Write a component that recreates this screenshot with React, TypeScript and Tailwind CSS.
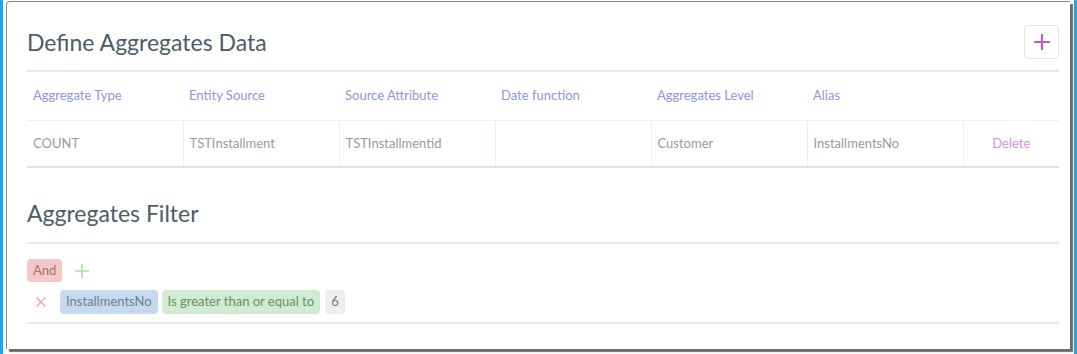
import React from 'react';

const columns = ['Aggregate Type', 'Entity Source', 'Source Attribute', 'Date function', 'Aggregates Level', 'Alias'];
const row = ['COUNT', 'TSTInstallment', 'TSTInstallmentid', '', 'Customer', 'InstallmentsNo'];

export default function App() {
  return (
    <div className="flex h-[354px] w-[1077px] overflow-hidden bg-white" style={{ fontFamily: 'Lato, "Open Sans", sans-serif' }}>
      <div className="w-[3px] shrink-0 bg-[#22a6e0]" />
      <div className="flex-1 pl-[3px] pt-[1px] pr-[4px]">
        <div className="h-[348px] rounded-tl-[4px] border-l border-t border-[#8a8a8a] bg-white shadow-[3px_3px_1px_rgba(60,60,60,0.75)] pl-[20px] pr-[11px]">
          {/* aggregates data */}
          <div className="flex h-[68px] items-center justify-between pt-[12px]">
            <h2 className="text-[23px] text-[#4a5e66]">Define Aggregates Data</h2>
            <button className="flex h-[34px] w-[35px] items-center justify-center rounded-[4px] border border-[#e2e2e2]">
              <svg width="18" height="18" viewBox="0 0 18 18">
                <path d="M9 1v16M1 9h16" stroke="#bd5ccc" strokeWidth="2.2" />
              </svg>
            </button>
          </div>
          <div className="h-[2px] bg-[#e6e6e6]" />
          <table className="w-full table-fixed border-collapse text-[13px]">
            <colgroup>
              {columns.map((c) => (
                <col key={c} className="w-[156px]" />
              ))}
              <col />
            </colgroup>
            <thead>
              <tr className="h-[48px]">
                {columns.map((c) => (
                  <th key={c} className="px-[6px] text-left font-normal text-[#8d97da]">{c}</th>
                ))}
                <th />
              </tr>
            </thead>
            <tbody>
              <tr className="h-[47px] border-t border-b-2 border-t-[#e6f2f6] border-b-[#e2e2e2]">
                {row.map((v, i) => (
                  <td key={i} className={`${i > 0 ? 'border-l' : ''} border-[#e6f2f6] px-[6px] text-[#9b9b9b]`}>{v}</td>
                ))}
                <td className="border-l border-[#e6f2f6] text-center text-[#d58fdc]">Delete</td>
              </tr>
            </tbody>
          </table>

          {/* filter */}
          <div className="flex h-[74px] items-center pt-[17px]">
            <h2 className="text-[23px] text-[#4a5e66]">Aggregates Filter</h2>
          </div>
          <div className="h-[2px] bg-[#e9e9e9]" />
          <div className="pt-[15px] text-[13px]">
            <div className="flex items-center gap-[13px]">
              <span className="flex h-[23px] items-center rounded-[4px] bg-[#f5c7c7] px-[6px] text-[#a27474]">And</span>
              <svg width="14" height="14" viewBox="0 0 14 14">
                <path d="M7 0v14M0 7h14" stroke="#a9e0a9" strokeWidth="1.6" />
              </svg>
            </div>
            <div className="mt-[8px] flex h-[24px] items-center">
              <svg className="ml-[9px] mr-[14px]" width="10" height="10" viewBox="0 0 10 10">
                <path d="M0.5 0.5l9 9M9.5 0.5l-9 9" stroke="#f2a5a5" strokeWidth="1.5" />
              </svg>
              <span className="flex h-[24px] items-center rounded-[4px] bg-[#c6d9ee] px-[6px] text-[#6f8090]">InstallmentsNo</span>
              <span className="ml-[4px] flex h-[24px] items-center rounded-[4px] bg-[#d0ebcf] px-[6px] text-[#6f8a6f]">Is greater than or equal to</span>
              <span className="ml-[5px] flex h-[24px] items-center rounded-[4px] bg-[#eeeeee] px-[6px] text-[#777]">6</span>
            </div>
            <div className="mt-[8px] h-[2px] bg-[#e9e9e9]" />
          </div>
        </div>
      </div>
      <div className="w-[3px] shrink-0 bg-[#22a6e0]" />
    </div>
  );
}
